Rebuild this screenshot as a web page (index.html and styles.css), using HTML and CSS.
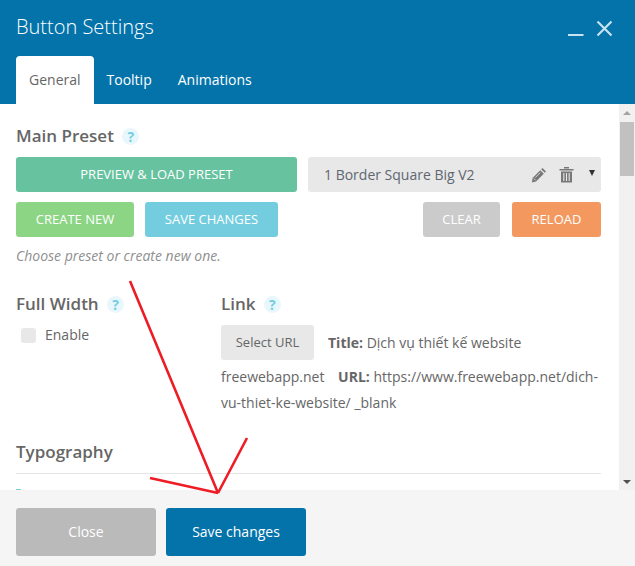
FILE: index.html
```html
<!DOCTYPE html>
<html lang="vi">
<head>
<meta charset="utf-8">
<title>Button Settings</title>
<link rel="stylesheet" href="styles.css">
</head>
<body>
<div class="modal">
  <header class="head">
    <div class="title-row">
      <h1 class="title">Button Settings</h1>
      <div class="win-btns">
        <svg class="win-icon" width="18" height="18" viewBox="0 0 18 18"><rect x="1" y="14" width="15.500" height="2" fill="#c5e3f0"/></svg>
        <svg class="win-icon" width="18" height="18" viewBox="0 0 18 18"><path d="M1.500 1.500L15.500 15.500M15.500 1.500L1.500 15.500" stroke="#c5e3f0" stroke-width="2.200" fill="none"/></svg>
      </div>
    </div>
    <nav class="tabs">
      <span class="tab tab-active">General</span>
      <span class="tab">Tooltip</span>
      <span class="tab">Animations</span>
    </nav>
  </header>
  <div class="body">
    <main class="content">
      <h2 class="sec sec-first">Main Preset <span class="help">?</span></h2>
      <div class="preset-row">
        <button class="btn btn-preview">PREVIEW &amp; LOAD PRESET</button>
        <div class="select">
          <span class="select-text">1 Border Square Big V2</span>
          <svg class="pencil" width="16" height="16" viewBox="0 0 16 16"><path d="M11.500 1l3.500 3.500-1.300 1.300-3.500-3.500zM9.300 3.200l3.500 3.500-7.800 7.800-4 .9 .5-4.400z" fill="#777"/><path d="M2.700 11.400l1.900 1.900M9.300 5.600l-5 5" stroke="#e8e8e8" stroke-width=".8" fill="none"/></svg>
          <svg class="trash" width="15" height="17" viewBox="0 0 15 17"><path d="M5 2.500V1h5v1.500M0.500 3h14v1.500H0.500zM2 5.500h11V16.500H2z" fill="#777"/><path d="M4.800 7v8M7.500 7v8M10.200 7v8" stroke="#e8e8e8" stroke-width="1.100"/></svg>
          <span class="caret"></span>
        </div>
      </div>
      <div class="action-row">
        <button class="btn btn-create">CREATE NEW</button>
        <button class="btn btn-save">SAVE CHANGES</button>
        <button class="btn btn-clear">CLEAR</button>
        <button class="btn btn-reload">RELOAD</button>
      </div>
      <p class="hint">Choose preset or create new one.</p>
      <div class="cols">
        <section class="col-left">
          <h2 class="sec">Full Width <span class="help">?</span></h2>
          <label class="check"><span class="box"></span>Enable</label>
        </section>
        <section class="col-right">
          <h2 class="sec">Link <span class="help">?</span></h2>
          <div class="link-text"><button class="btn-url">Select URL</button><b class="lbl-title">Title:</b> Dịch vụ thiết kế website freewebapp.net <b class="lbl-url">URL:</b> https://www.freewebapp.net/dich-vu-thiet-ke-website/ _blank</div>
        </section>
      </div>
      <h2 class="sec sec-typo">Typography</h2>
      <div class="rule"></div>
      <div class="cut"></div>
    </main>
    <div class="scrollbar">
      <span class="arrow-up"></span>
      <span class="thumb"></span>
      <span class="track"></span>
      <span class="arrow-down"></span>
    </div>
  </div>
  <footer class="foot">
    <button class="fbtn fbtn-close">Close</button>
    <button class="fbtn fbtn-save">Save changes</button>
  </footer>
  <svg class="annot" width="635" height="566" viewBox="0 0 635 566"><path d="M130 281L218 493M247 438L218 493M150 478L218 493" stroke="#ee1c25" stroke-width="2.600" fill="none"/></svg>
</div>
</body>
</html>
```

FILE: styles.css
```css
* { box-sizing: border-box; }
html, body { margin: 0; padding: 0; }
body { width: 635px; height: 566px; overflow: hidden; font-family: "Open Sans", sans-serif; color: #666; background: #fff; }
.modal { position: relative; width: 635px; height: 566px; display: flex; flex-direction: column; }
.head { height: 104px; background: #0473aa; padding: 0 0 0 16px; display: flex; flex-direction: column; flex: none; }
.title-row { height: 56px; display: flex; justify-content: space-between; }
.title { margin: 13px 0 0; font-size: 20px; line-height: 28px; font-weight: 300; color: #fff; }
.win-btns { display: flex; gap: 11px; padding: 20px 21px 0 0; height: 38px; }
.win-icon { display: block; }
.tabs { display: flex; height: 48px; gap: 0; }
.tab { padding: 0 13px; line-height: 48px; font-size: 14px; color: #fff; }
.tab-active { background: #fff; color: #666; border-radius: 4px 4px 0 0; }
.body { flex: 1; display: flex; min-height: 0; }
.content { flex: 1; padding: 0 18px 0 16px; overflow: hidden; position: relative; }
.sec { margin: 0; font-size: 17px; line-height: 22px; font-weight: 600; color: #666; }
.sec-first { padding-top: 21px; }
.help { display: inline-block; width: 17px; height: 17px; line-height: 17px; border-radius: 50%; background: #e8f7fc; color: #74cde0; font-size: 14px; font-weight: 700; text-align: center; margin-left: 4px; vertical-align: 0; }
.preset-row { display: flex; gap: 11px; margin-top: 10px; }
.btn { border: 0; height: 35px; padding: 0 0 2px; border-radius: 3px; color: #fff; font-family: inherit; font-size: 13px; text-align: center; }
.btn-preview { width: 281px; background: #67c2a0; }
.select { flex: 1; height: 35px; background: #e8e8e8; border-radius: 3px; display: flex; align-items: center; padding: 0 6px 0 16px; }
.select-text { flex: 1; font-size: 14px; color: #5f6670; }
.pencil { margin-right: 12px; }
.trash { margin-right: 15px; }
.caret { width: 0; height: 0; border-left: 3.500px solid transparent; border-right: 3.500px solid transparent; border-top: 6px solid #333; margin-top: -3px; }
.action-row { display: flex; margin-top: 10px; }
.btn-create { width: 118px; background: #8bd584; margin-right: 11px; }
.btn-save { width: 133px; background: #74cddf; margin-right: auto; }
.btn-clear { width: 77px; background: #cbcbcb; margin-right: 12px; }
.btn-reload { width: 89px; background: #f3985f; }
.hint { margin: 7px 0 0; font-size: 14px; line-height: 23px; font-style: italic; color: #8f8f8f; }
.cols { display: flex; margin-top: 26px; }
.col-left { width: 205px; flex: none; }
.col-right { flex: 1; }
.check { display: flex; align-items: center; margin: 10px 0 0 5px; font-size: 14px; line-height: 20px; color: #666; }
.box { width: 15px; height: 15px; border-radius: 3px; background: #e8e8e8; margin-right: 9px; }
.link-text { margin-top: 10px; font-size: 14px; line-height: 26px; color: #666; }
.btn-url { border: 0; width: 93px; height: 35px; border-radius: 3px; background: #e8e8e8; color: #666; font-family: inherit; font-size: 13px; padding: 0 0 2px; margin: 0 14px 4px 0; vertical-align: middle; }
.lbl-url { margin-left: 10px; font-weight: 700; }
.lbl-title { font-weight: 700; }
.sec-typo { margin-top: 25px; }
.rule { margin-top: 10px; height: 1px; background: #e5e5e5; }
.cut { margin-top: 15px; width: 5px; height: 1px; background: #74cddf; }
.scrollbar { width: 16px; flex: none; background: #f1f1f1; display: flex; flex-direction: column; align-items: center; }
.arrow-up { width: 0; height: 0; margin: 7px 0 7px; border-left: 4px solid transparent; border-right: 4px solid transparent; border-bottom: 4px solid #a3a3a3; }
.thumb { width: 14px; height: 54px; background: #c1c1c1; flex: none; }
.track { flex: 1; }
.arrow-down { width: 0; height: 0; margin: 0 0 6px; border-left: 4px solid transparent; border-right: 4px solid transparent; border-top: 4px solid #505050; }
.foot { height: 76px; flex: none; background: #f5f5f5; padding: 18px 16px 0; display: flex; gap: 10px; align-items: flex-start; }
.fbtn { width: 140px; height: 48px; border: 0; border-radius: 3px; color: #fff; font-family: inherit; font-size: 14px; padding: 0 0 2px; }
.fbtn-close { background: #bababa; }
.fbtn-save { background: #0473aa; }
.annot { position: absolute; left: 0; top: 0; pointer-events: none; }
```
